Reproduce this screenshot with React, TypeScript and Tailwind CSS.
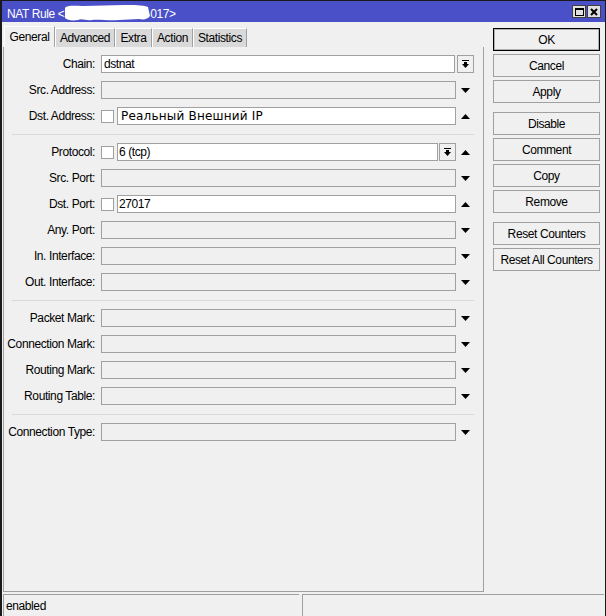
import React from "react";

function Down() {
  return (
    <svg width="9" height="5" viewBox="0 0 9 5" className="block">
      <polygon points="0,0 9,0 4.5,5" fill="#000" />
    </svg>
  );
}
function Up() {
  return (
    <svg width="9" height="5" viewBox="0 0 9 5" className="block">
      <polygon points="0,5 9,5 4.5,0" fill="#000" />
    </svg>
  );
}
function DropIcon() {
  return (
    <svg width="7" height="8" viewBox="0 0 7 8" className="block">
      <rect x="0" y="0" width="7" height="1" fill="#000" />
      <rect x="2" y="2" width="3" height="2" fill="#000" />
      <polygon points="0,4 7,4 3.5,8" fill="#000" />
    </svg>
  );
}

function ArrowCell({ dir }: { dir?: "up" | "down" }) {
  return (
    <div className="flex h-[18px] w-[18px] shrink-0 items-center justify-center">
      {dir === "up" ? <Up /> : dir === "down" ? <Down /> : null}
    </div>
  );
}

function DropBtn({ cls }: { cls: string }) {
  return (
    <div className={"flex h-[18px] w-[17px] shrink-0 items-center justify-center border border-[#a0a0a0] bg-[#f0f0f0] " + cls}>
      <DropIcon />
    </div>
  );
}

function Label({ text }: { text: string }) {
  return <div className="w-[92px] shrink-0 whitespace-nowrap pr-[1px] text-right leading-[18px]">{text}</div>;
}

function Check() {
  return <div className="ml-[5px] h-[13px] w-[13px] shrink-0 border border-[#a0a0a0] bg-white" />;
}

function EmptyRow({ label }: { label: string }) {
  return (
    <div className="flex h-[18px] items-center">
      <Label text={label} />
      <div className="ml-[5px] h-[18px] w-[355px] shrink-0 border border-[#a0a0a0] bg-[#f0f0f0]" />
      <ArrowCell dir="down" />
    </div>
  );
}

function Sep() {
  return <div className="ml-[8px] h-[2px] w-[462px] border-b border-[#d9d9d9]" />;
}

function Btn({ text, def }: { text: string; def?: boolean }) {
  return (
    <div
      className={
        "flex h-[23px] w-[107px] items-center justify-center whitespace-nowrap bg-[#f0f0f0] " +
        (def ? "border border-black shadow-[inset_0_0_0_1px_#b0b0b0]" : "border border-[#a0a0a0]")
      }
    >
      {text}
    </div>
  );
}

export default function App() {
  return (
    <div className="h-[616px] w-[606px] overflow-hidden bg-[#f0f0f0] font-['Liberation_Sans',Arial,sans-serif] text-[12px] tracking-[-0.4px] text-black">
      <div className="flex h-[616px] w-[606px] flex-col border-t border-r border-l-2 border-[#1a1a1a]">
        {/* title bar */}
        <div className="flex h-[21px] shrink-0 items-center bg-[#4a50c8] pl-[5px] pt-[4px] text-[12px] text-white">
          <span className="whitespace-nowrap">NAT Rule &lt;</span>
          <svg width="86" height="17" viewBox="0 0 86 17" className="-mt-[3px] block shrink-0">
            <path
              d="M1,4 C3,1 10,2 20,2 L60,1 C70,1 78,1 84,3 L86,12 C84,15 80,16 75,15 L55,16 C45,17 35,15 28,16 C22,17 18,14 14,16 C8,17 3,16 1,14 Z"
              fill="#fff"
            />
          </svg>
          <span className="whitespace-nowrap">017&gt;</span>
          <div className="ml-auto mr-[4px] -mt-[4px] flex gap-[1px]">
            <div className="flex h-[13px] w-[14px] items-center justify-center border border-[#404040] bg-[#e0e0e0]">
              <div className="h-[8px] w-[9px] border border-black border-t-2" />
            </div>
            <div className="flex h-[13px] w-[14px] items-center justify-center border border-[#404040] bg-[#e0e0e0]">
              <svg width="8" height="8" viewBox="0 0 8 8" className="block">
                <path d="M1,1 L7,7 M7,1 L1,7" stroke="#000" strokeWidth="2" />
              </svg>
            </div>
          </div>
        </div>

        {/* main */}
        <div className="flex flex-1">
          <div className="flex w-[482px] shrink-0 flex-col">
            {/* tabs */}
            <div className="ml-[2px] flex h-[25px] items-end pt-[4px]">
              <div className="flex h-[21px] w-[51px] items-center justify-center border-t border-l border-r border-t-white border-l-white border-r-[#a0a0a0] bg-[#f0f0f0]">
                General
              </div>
              <div className="flex h-[19px] w-[60px] items-center justify-center border-t border-l border-r border-t-white border-l-white border-r-[#a0a0a0] bg-[#d9d9d9]">
                Advanced
              </div>
              <div className="flex h-[19px] w-[37px] items-center justify-center border-t border-l border-r border-t-white border-l-white border-r-[#a0a0a0] bg-[#d9d9d9]">
                Extra
              </div>
              <div className="flex h-[19px] w-[41px] items-center justify-center border-t border-l border-r border-t-white border-l-white border-r-[#a0a0a0] bg-[#d9d9d9]">
                Action
              </div>
              <div className="flex h-[19px] w-[54px] items-center justify-center border-t border-l border-r border-t-white border-l-white border-r-[#a0a0a0] bg-[#d9d9d9]">
                Statistics
              </div>
            </div>
            {/* panel */}
            <div className="ml-[1px] flex h-[545px] w-[481px] flex-col gap-[8px] border-l border-r border-b border-l-[#a0a0a0] border-r-[#a0a0a0] border-b-[#a0a0a0] pt-[8px]">
              <div className="flex h-[18px] items-center">
                <Label text="Chain:" />
                <div className="ml-[5px] flex h-[18px] w-[354px] shrink-0 items-center border border-[#a0a0a0] bg-white pl-[2px]">dstnat</div>
                <DropBtn cls="ml-[2px]" />
              </div>
              <EmptyRow label="Src. Address:" />
              <div className="flex h-[18px] items-center">
                <Label text="Dst. Address:" />
                <Check />
                <div className="ml-[3px] flex h-[18px] w-[339px] shrink-0 items-center border border-[#a0a0a0] bg-white pl-[3px] font-['DejaVu_Sans',sans-serif] text-[12px] tracking-[0.2px]">
                  Реальный Внешний IP
                </div>
                <ArrowCell dir="up" />
              </div>
              <Sep />
              <div className="flex h-[18px] items-center">
                <Label text="Protocol:" />
                <Check />
                <div className="ml-[3px] flex h-[18px] w-[321px] shrink-0 items-center border border-[#a0a0a0] bg-white pl-[1px]">6 (tcp)</div>
                <DropBtn cls="ml-[1px]" />
                <ArrowCell dir="up" />
              </div>
              <EmptyRow label="Src. Port:" />
              <div className="flex h-[18px] items-center">
                <Label text="Dst. Port:" />
                <Check />
                <div className="ml-[3px] flex h-[18px] w-[339px] shrink-0 items-center border border-[#a0a0a0] bg-white pl-[1px]">27017</div>
                <ArrowCell dir="up" />
              </div>
              <EmptyRow label="Any. Port:" />
              <EmptyRow label="In. Interface:" />
              <EmptyRow label="Out. Interface:" />
              <Sep />
              <EmptyRow label="Packet Mark:" />
              <EmptyRow label="Connection Mark:" />
              <EmptyRow label="Routing Mark:" />
              <EmptyRow label="Routing Table:" />
              <Sep />
              <EmptyRow label="Connection Type:" />
            </div>
          </div>
          {/* buttons */}
          <div className="ml-[9px] flex flex-col pt-[6px]">
            <div className="flex flex-col gap-[3px]">
              <Btn text="OK" def />
              <Btn text="Cancel" />
              <Btn text="Apply" />
            </div>
            <div className="mt-[9px] flex flex-col gap-[3px]">
              <Btn text="Disable" />
              <Btn text="Comment" />
              <Btn text="Copy" />
              <Btn text="Remove" />
            </div>
            <div className="mt-[9px] flex flex-col gap-[3px]">
              <Btn text="Reset Counters" />
              <Btn text="Reset All Counters" />
            </div>
          </div>
        </div>

        {/* status bar */}
        <div className="mt-[2px] flex h-[22px] shrink-0">
          <div className="ml-[1px] flex w-[296px] items-center border-t border-l border-[#a0a0a0] pl-[2px]">enabled</div>
          <div className="ml-[3px] w-[302px] border-t border-l border-[#a0a0a0]" />
        </div>
      </div>
    </div>
  );
}
